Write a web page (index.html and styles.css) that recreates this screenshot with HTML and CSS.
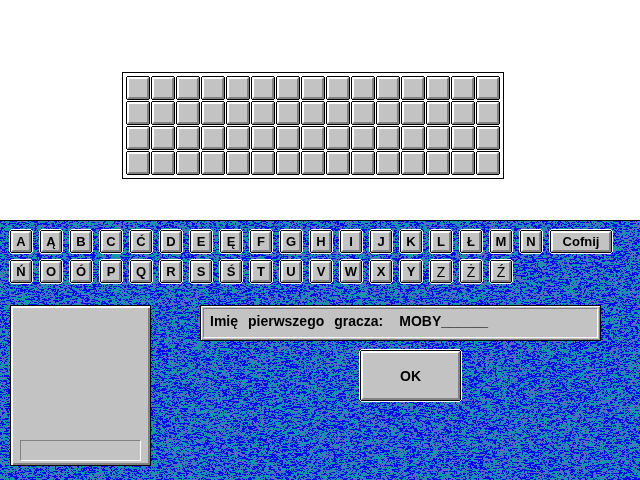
FILE: index.html
```html
<!DOCTYPE html>
<html lang="pl">
<head>
  <meta charset="UTF-8">
  <meta name="viewport" content="width=device-width, initial-scale=1.0">
  <title>Imię gracza</title>
  <link rel="stylesheet" href="styles.css">
</head>
<body>
  <header class="stage">
    <div class="board" id="board"></div>
  </header>

  <main class="desk">
    <canvas class="noise" id="noise"></canvas>

    <div class="keyboard">
      <div class="key-row" id="row1"></div>
      <div class="key-row" id="row2"></div>
    </div>

    <div class="lower">
      <section class="side-panel">
        <div class="slot"></div>
      </section>

      <form class="entry" id="entry">
        <div class="name-panel">
          <div class="name-field">
            <label for="player"><span>Imię</span> <span>pierwszego</span> <span>gracza:</span></label>
            <input type="text" id="player" value="MOBY______" readonly>
          </div>
        </div>
        <button type="submit" class="key ok">OK</button>
      </form>
    </div>
  </main>

  <script src="script.js"></script>
</body>
</html>
```
FILE: styles.css
```css
:root {
  --face: #c3c3c3;
  --light: #fff;
  --shade: #828282;
  --line: #000;
}

* {
  box-sizing: border-box;
}

body {
  display: flex;
  flex-direction: column;
  min-height: 100vh;
  margin: 0;
  background: #fff;
  color: #000;
  font: bold 14px/18px "Liberation Sans", Arial, sans-serif;
}

.stage {
  display: flex;
  justify-content: center;
  padding: 72px 14px 41px 0;
}

.board {
  display: grid;
  grid-template-columns: repeat(15, 22px);
  gap: 3px;
  padding: 4px;
  border: 1px solid var(--line);
}

.tile {
  height: 22px;
  background: var(--face);
  border: 2px solid;
  border-color: var(--light) var(--shade) var(--shade) var(--light);
  box-shadow: 0 -1px var(--line), 0 1px var(--line), -1px 0 var(--line), 1px 0 var(--line);
}

.desk {
  position: relative;
  flex: 1;
  padding: 10px 11px 14px;
  border-top: 1px solid var(--line);
  background: #2052d0;
  overflow: hidden;
}

.noise {
  position: absolute;
  top: 0;
  left: 0;
  image-rendering: pixelated;
}

.keyboard,
.lower {
  position: relative;
}

.keyboard {
  display: grid;
  gap: 9px;
}

.key-row {
  display: flex;
  gap: 10px;
}

/* the black outline skips the corners, the white one wraps around it */
.key {
  flex: none;
  width: 20px;
  height: 21px;
  padding: 0;
  background: var(--face);
  border: 2px solid;
  border-color: var(--light) var(--shade) var(--shade) var(--light);
  border-radius: 0;
  box-shadow:
    0 -1px var(--line), 0 1px var(--line), -1px 0 var(--line), 1px 0 var(--line),
    0 0 0 1px var(--light),
    0 -2px var(--light), 0 2px var(--light), -2px 0 var(--light), 2px 0 var(--light);
  color: inherit;
  font: inherit;
  font-size: 13px;
  line-height: 16px;
  cursor: pointer;
}

.key.thin {
  font-size: 14px;
  font-weight: normal;
}

.key.wide {
  width: 60px;
}

.lower {
  display: flex;
  align-items: flex-start;
  gap: 49px;
  margin: 23px 0 0 -1px;
}

.side-panel,
.name-panel {
  border: 1px solid var(--line);
  background: var(--face);
}

.side-panel {
  display: flex;
  align-items: flex-end;
  flex: none;
  width: 141px;
  height: 161px;
  padding: 4px 9px;
  box-shadow: inset 2px 2px var(--light), inset -2px -2px var(--shade);
}

.slot {
  flex: 1;
  height: 21px;
  border: 1px solid;
  border-color: var(--shade) var(--light) var(--light) var(--shade);
}

.entry {
  flex: 1;
}

.name-panel {
  max-width: 401px;
  padding: 2px;
  box-shadow: inset 1px 1px var(--light), inset -1px -1px var(--shade);
}

.name-field {
  display: flex;
  align-items: center;
  gap: 16px;
  height: 30px;
  padding: 0 6px 4px;
  border: 1px solid;
  border-color: var(--shade) var(--light) var(--light) var(--shade);
}

.name-field label {
  display: flex;
  gap: 10px;
}

.name-field input {
  flex: 1;
  min-width: 0;
  padding: 0;
  border: 0;
  outline: 0;
  background: transparent;
  color: inherit;
  font: inherit;
}

.ok {
  display: block;
  width: 99px;
  height: 49px;
  margin: 10px 0 0 161px;
  font-size: 14px;
}
```
FILE: script.js
```javascript
const ROWS = {
  row1: [..."AĄBCĆDEĘFGHIJKLŁMN"],
  row2: [..."ŃOÓPQRSŚTUVWXYZŻŹ"]
};
const NAME_LENGTH = 10;
const COLORS = [[0, 0, 255], [0, 0, 255], [0, 0, 255], [0, 160, 160], [0, 160, 160], [0, 160, 160], [100, 100, 195], [100, 100, 195]];

const board = document.getElementById("board");
const player = document.getElementById("player");
const noise = document.getElementById("noise");

for (let i = 0; i < 60; i++) {
  const tile = document.createElement("div");
  tile.className = "tile";
  board.appendChild(tile);
}

function addKey(row, text, className, onClick) {
  const key = document.createElement("button");
  key.type = "button";
  key.className = className;
  key.textContent = text;
  key.addEventListener("click", onClick);
  row.appendChild(key);
}

function setName(name) {
  player.value = name.slice(0, NAME_LENGTH).padEnd(NAME_LENGTH, "_");
}

function getName() {
  return player.value.replace(/_/g, "");
}

Object.keys(ROWS).forEach(id => {
  const row = document.getElementById(id);
  ROWS[id].forEach(letter => {
    const className = "ZŻŹ".includes(letter) ? "key thin" : "key";
    addKey(row, letter, className, () => setName(getName() + letter));
  });
});

addKey(document.getElementById("row1"), "Cofnij", "key wide", () => setName(getName().slice(0, -1)));

document.getElementById("entry").addEventListener("submit", e => e.preventDefault());

function createRandom(seed) {
  return () => {
    seed = (seed + 0x6d2b79f5) | 0;
    let t = Math.imul(seed ^ (seed >>> 15), 1 | seed);
    t = (t + Math.imul(t ^ (t >>> 7), 61 | t)) ^ t;
    return ((t ^ (t >>> 14)) >>> 0) / 4294967296;
  };
}

// random colour per pixel with short horizontal runs, same pattern on every draw
function drawNoise() {
  const desk = noise.parentElement;
  noise.width = desk.clientWidth;
  noise.height = desk.clientHeight;
  const ctx = noise.getContext("2d");
  const image = ctx.createImageData(noise.width, noise.height);
  const random = createRandom(7);
  let color = COLORS[0];
  for (let i = 0; i < image.data.length; i += 4) {
    if (random() > 0.3) {
      color = COLORS[Math.floor(random() * COLORS.length)];
    }
    image.data[i] = color[0];
    image.data[i + 1] = color[1];
    image.data[i + 2] = color[2];
    image.data[i + 3] = 255;
  }
  ctx.putImageData(image, 0, 0);
}

window.addEventListener("resize", drawNoise);
drawNoise();
```
